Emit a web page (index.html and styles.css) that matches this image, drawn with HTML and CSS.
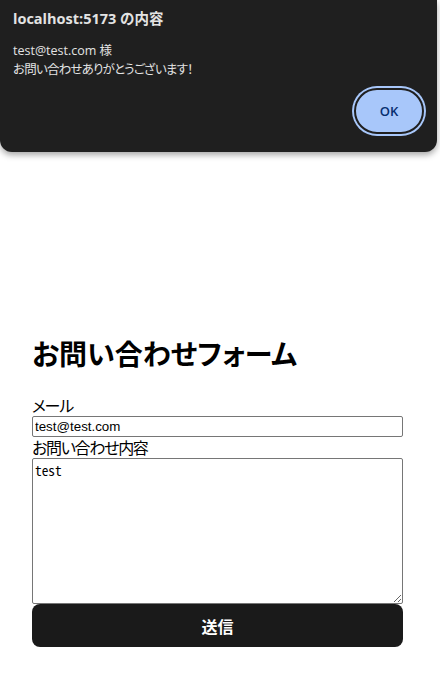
FILE: index.html
```html
<!DOCTYPE html>
<html lang="ja">
<head>
    <meta charset="UTF-8">
    <meta name="viewport" content="width=device-width, initial-scale=1.0">
    <title>お問い合わせフォーム</title>
    <link rel="stylesheet" href="styles.css">
</head>
<body>
    <main class="page">
        <h1 class="title">お問い合わせフォーム</h1>
        <form class="contact-form">
            <label class="field-label" for="email">メール</label>
            <input class="field-input" id="email" type="email" value="test@test.com">
            <label class="field-label" for="message">お問い合わせ内容</label>
            <textarea class="field-textarea" id="message">test</textarea>
            <button class="submit-btn" type="button">送信</button>
        </form>
    </main>

    <div class="alert">
        <div class="alert-title">localhost:5173 の内容</div>
        <div class="alert-body">
            <p>test@test.com 様</p>
            <p class="alert-jp">お問い合わせありがとうございます！</p>
        </div>
        <div class="alert-actions">
            <button class="alert-ok" type="button">OK</button>
        </div>
    </div>
</body>
</html>
```

FILE: styles.css
```css
* {
    margin: 0;
    padding: 0;
    box-sizing: border-box;
}

body {
    font-family: "Noto Sans CJK JP", "Noto Sans", sans-serif;
    font-feature-settings: "palt";
    background: #ffffff;
    color: #000000;
    min-height: 673px;
}

.page {
    width: 371px;
    margin-left: 32px;
    padding-top: 331px;
}

.title {
    font-size: 28px;
    font-weight: 700;
    line-height: 44px;
    margin-bottom: 20px;
}

.contact-form {
    display: flex;
    flex-direction: column;
}

.field-label {
    font-size: 16px;
    line-height: 21px;
    letter-spacing: -1.3px;
}

.field-input {
    height: 21px;
    padding: 1px 2px;
    border: 1px solid #767676;
    border-radius: 2px;
    font-family: "Liberation Sans", Arial, sans-serif;
    font-size: 13.33px;
    color: #000000;
}

.field-textarea {
    height: 146px;
    padding: 2px;
    border: 1px solid #767676;
    border-radius: 2px;
    font-family: "Noto Sans Mono CJK JP", "DejaVu Sans Mono", monospace;
    font-size: 13.33px;
    color: #000000;
    resize: vertical;
}

.submit-btn {
    height: 43px;
    border: none;
    border-radius: 8px;
    background: #1a1a1a;
    color: #ffffff;
    font-family: "Noto Sans CJK JP", sans-serif;
    font-size: 16px;
    font-weight: 700;
}

/* ブラウザのアラート */
.alert {
    position: absolute;
    top: 0;
    left: 0;
    width: 437px;
    height: 152px;
    background: #1f1f1f;
    border-radius: 0 0 12px 12px;
    box-shadow: 0 3px 6px rgba(0, 0, 0, 0.35);
    color: #e3e3e3;
    font-family: "Open Sans", "Noto Sans CJK JP", sans-serif;
    padding: 9px 13px 0;
}

.alert-title {
    font-size: 14.5px;
    font-weight: 700;
    line-height: 20px;
}

.alert-body {
    margin-top: 12px;
    font-size: 12.5px;
    line-height: 19px;
}

.alert-jp {
    letter-spacing: -0.8px;
}

.alert-actions {
    display: flex;
    justify-content: flex-end;
    margin-top: 9px;
}

.alert-ok {
    width: 70px;
    height: 46px;
    border-radius: 23px;
    background: #a8c7fa;
    border: 2px solid #1f1f1f;
    box-shadow: 0 0 0 2px #a8c7fa;
    outline: none;
    color: #062e6f;
    font-family: "Open Sans", sans-serif;
    font-size: 13px;
    font-weight: 600;
}
```
